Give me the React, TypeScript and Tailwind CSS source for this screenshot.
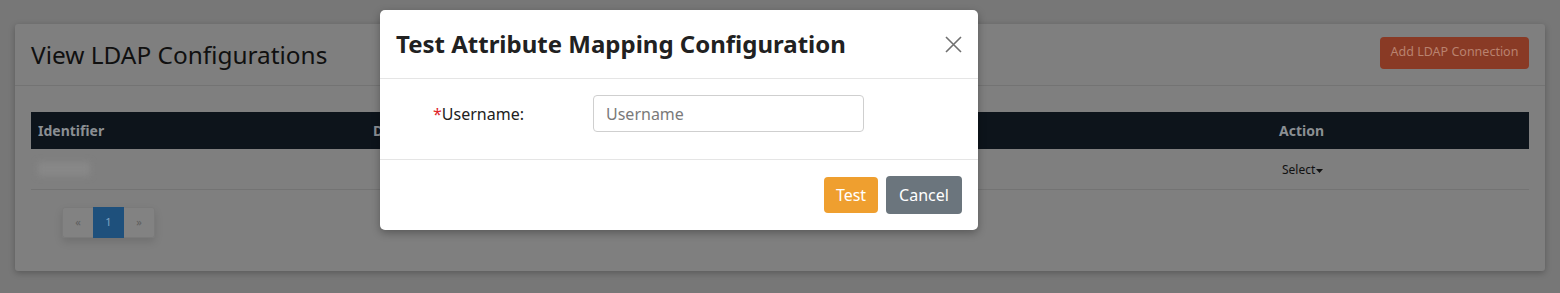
import React from "react";

export default function App() {
  return (
    <div
      className="relative w-full h-[293px] bg-[#777777] overflow-hidden"
      style={{ fontFamily: '"Noto Sans", "Open Sans", sans-serif' }}
    >
      {/* Page (dimmed) */}
      <div className="pt-[24px] px-[15px]">
        <div className="h-[247px] bg-[#7f7f7f] rounded-[3px] shadow-[0_2px_6px_rgba(0,0,0,0.25)]">
          <div className="h-[62px] flex items-center justify-between pl-[16px] pr-[16px] border-b border-[#737373]">
            <h1 className="text-[24.4px] leading-none text-[#101010] mt-[1px]">
              View LDAP Configurations
            </h1>
            <button className="w-[149px] h-[32px] mb-[4px] rounded-[4px] bg-[#893a25] text-[12.5px] text-[#b9826f] flex items-center justify-center">
              Add LDAP Connection
            </button>
          </div>
          <div className="px-[16px] pt-[26px]">
            <div className="h-[37px] bg-[#0d141b] flex items-center text-[14px] font-bold text-[#8b8f93]">
              <div className="w-[335px] pl-[7px]">Identifier</div>
              <div className="flex-1 pl-[7px]">D</div>
              <div className="w-[256px] pl-[6px]">Action</div>
            </div>
            <div className="h-[41px] flex items-center border-b border-[#737373] text-[12px] text-[#111]">
              <div className="w-[335px] pl-[7px]">
                <div className="w-[52px] h-[14px] bg-[#888888] blur-[3px]" />
              </div>
              <div className="flex-1" />
              <div className="w-[256px] pl-[9px] flex items-center pt-[2px]">
                Select
                <svg width="7" height="4" viewBox="0 0 7 4" className="ml-[1px] mt-[2px]">
                  <path d="M0 0H7L3.5 4Z" fill="#111" />
                </svg>
              </div>
            </div>
            <div className="mt-[17px] ml-[31px] flex w-max rounded-[3px] overflow-hidden shadow-[0_4px_8px_rgba(0,0,0,0.12)] text-[11px]">
              <div className="w-[31px] h-[31px] bg-[#828282] flex items-center justify-center text-[#5e5e5e] border border-[#7a7a7a] border-r-0 rounded-l-[3px]">
                «
              </div>
              <div className="w-[31px] h-[31px] bg-[#1e507c] flex items-center justify-center text-[#7fa4c4]">
                1
              </div>
              <div className="w-[31px] h-[31px] bg-[#828282] flex items-center justify-center text-[#5e5e5e] border border-[#7a7a7a] border-l-0 rounded-r-[3px]">
                »
              </div>
            </div>
          </div>
        </div>
      </div>

      {/* Modal */}
      <div className="absolute left-[380px] top-[10px] w-[598px] h-[220px] bg-white rounded-[5px] shadow-[0_3px_9px_rgba(0,0,0,0.3)] flex flex-col">
        <div className="h-[69px] flex items-center justify-between pl-[16px] pr-[16px] border-b border-[#e5e5e5]">
          <h2 className="text-[24px] font-bold text-[#212121] leading-none">
            Test Attribute Mapping Configuration
          </h2>
          <svg width="17" height="17" viewBox="0 0 17 17">
            <path d="M1 1L16 16M16 1L1 16" stroke="#707070" strokeWidth="1.6" />
          </svg>
        </div>
        <div className="h-[81px] flex items-start pt-[16px] border-b border-[#e5e5e5]">
          <div className="w-[213px] pl-[53px] text-[16px] text-[#212121] h-[37px] flex items-center">
            <span className="text-[#e0242a]">*</span>Username:
          </div>
          <input
            className="w-[271px] h-[37px] border border-[#cfcfcf] rounded-[4px] px-[12px] text-[16px] text-[#212121] placeholder:text-[#7a7a7a] outline-none"
            placeholder="Username"
            style={{ fontFamily: '"Noto Sans", sans-serif' }}
          />
        </div>
        <div className="flex-1 flex items-center justify-end gap-[8px] pr-[16px]">
          <button className="w-[54px] h-[36px] rounded-[4px] bg-[#ef9f2f] text-white text-[16px]">
            Test
          </button>
          <button className="w-[76px] h-[38px] rounded-[4px] bg-[#6b757d] text-white text-[16px]">
            Cancel
          </button>
        </div>
      </div>
    </div>
  );
}
